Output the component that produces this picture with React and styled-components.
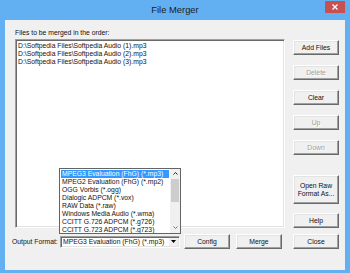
import React from 'react';
import styled, { createGlobalStyle } from 'styled-components';

const GlobalStyle = createGlobalStyle`
  html, body {
    margin: 0;
    padding: 0;
  }
  body {
    font-family: "Liberation Sans", Arial, sans-serif;
    background: #ffffff;
  }
`;

const Window = styled.div`
  width: 350px;
  height: 273px;
  box-sizing: border-box;
  background: #62b0f2;
  padding: 0 5px 3px 5px;
  display: flex;
  flex-direction: column;
`;

const TitleBar = styled.div`
  height: 20px;
  display: grid;
  grid-template-columns: 1fr auto 1fr;
  align-items: start;
`;

const Title = styled.div`
  grid-column: 2;
  font-size: 9.4px;
  line-height: 20px;
  color: #1c1c1c;
`;

const CloseBox = styled.div`
  grid-column: 3;
  justify-self: end;
  margin-top: 1px;
  width: 20px;
  height: 12px;
  background: #c75050;
  display: flex;
  align-items: center;
  justify-content: center;
`;

const Client = styled.div`
  flex: 1;
  background: #f0f0f0;
  display: grid;
  grid-template-columns: 280px 46px;
  column-gap: 8px;
  font-size: 6.8px;
  color: #111;
`;

const LeftColumn = styled.div`
  display: flex;
  flex-direction: column;
`;

const Caption = styled.div`
  margin: 9px 0 2px 10px;
  height: 8px;
  line-height: 8px;
`;

const ListBox = styled.div`
  margin-left: 10px;
  width: 270px;
  height: 189px;
  box-sizing: border-box;
  background: #fff;
  border: 1px solid;
  border-color: #a0a0a0 #ffffff #ffffff #a0a0a0;
  box-shadow: inset 1px 1px 0 #696969, inset -1px -1px 0 #e3e3e3;
  padding: 2px;
`;

const FileRow = styled.div`
  line-height: 8px;
  white-space: nowrap;
`;

const BottomRow = styled.div`
  margin-top: 6px;
  height: 15px;
  padding-left: 7px;
  display: flex;
  align-items: center;
`;

const FieldLabel = styled.div`
  width: 48px;
  white-space: nowrap;
`;

const ComboWrap = styled.div`
  position: relative;
  width: 120px;
  height: 12px;
  margin-right: 4px;
`;

const ComboField = styled.div`
  height: 100%;
  box-sizing: border-box;
  background: #fff;
  border: 1px solid;
  border-color: #a0a0a0 #ffffff #ffffff #a0a0a0;
  box-shadow: inset 1px 1px 0 #696969, inset -1px -1px 0 #e3e3e3;
  display: flex;
  align-items: center;
  padding: 0 1px 0 2px;
`;

const ComboText = styled.div`
  flex: 1;
  line-height: 8px;
  white-space: nowrap;
  overflow: hidden;
`;

const ComboButton = styled.div`
  width: 9px;
  height: 8px;
  background: #f0f0f0;
  display: flex;
  align-items: center;
  justify-content: center;
`;

const DropList = styled.div`
  position: absolute;
  left: -1px;
  bottom: calc(100% + 2px);
  width: 122px;
  height: 66px;
  box-sizing: border-box;
  border: 1px solid #646464;
  background: #fff;
  display: flex;
  overflow: hidden;
  z-index: 2;
`;

const DropItems = styled.div`
  flex: 1;
  padding: 1px 1px 0 1px;
  overflow: hidden;
`;

const DropItem = styled.div`
  line-height: 8px;
  height: 8px;
  padding-left: 1px;
  white-space: nowrap;
  box-sizing: border-box;
  background: ${(p) => (p.$selected ? '#3399ff' : 'transparent')};
  color: ${(p) => (p.$selected ? '#fff' : '#111')};
`;

const ScrollBar = styled.div`
  width: 10px;
  background: #f0f0f0;
  display: flex;
  flex-direction: column;
  align-items: center;
`;

const ScrollArrow = styled.div`
  height: 10px;
  width: 100%;
  display: flex;
  align-items: center;
  justify-content: center;
`;

const ScrollThumb = styled.div`
  width: 8px;
  height: 23px;
  background: #cdcdcd;
`;

const ScrollTrack = styled.div`
  flex: 1;
`;

const RightColumn = styled.div`
  display: flex;
  flex-direction: column;
  padding-top: 20px;
`;

const Button = styled.div`
  box-sizing: border-box;
  width: 46px;
  height: ${(p) => p.$h || 15}px;
  margin-top: ${(p) => p.$mt || 0}px;
  margin-left: ${(p) => p.$ml || 0}px;
  flex-shrink: 0;
  background: #f0f0f0;
  border: 1px solid;
  border-color: #ffffff #696969 #696969 #ffffff;
  box-shadow: inset -1px -1px 0 #a0a0a0, inset 1px 1px 0 #e3e3e3;
  display: flex;
  align-items: center;
  justify-content: center;
  text-align: center;
  line-height: 8px;
  color: ${(p) => (p.$disabled ? '#a0a0a0' : '#111')};
  text-shadow: ${(p) => (p.$disabled ? '1px 1px 0 #fff' : 'none')};
`;

const files = [
  'D:\\Softpedia Files\\Softpedia Audio (1).mp3',
  'D:\\Softpedia Files\\Softpedia Audio (2).mp3',
  'D:\\Softpedia Files\\Softpedia Audio (3).mp3',
];

const formats = [
  'MPEG3 Evaluation (FhG) (*.mp3)',
  'MPEG2 Evaluation (FhG) (*.mp2)',
  'OGG Vorbis (*.ogg)',
  'Dialogic ADPCM (*.vox)',
  'RAW Data (*.raw)',
  'Windows Media Audio (*.wma)',
  'CCITT G.726 ADPCM (*.g726)',
  'CCITT G.723 ADPCM (*.g723)',
];

function Chevron({ up }) {
  return (
    <svg width="5" height="3" viewBox="0 0 5 3">
      <path
        d={up ? 'M0.5 2.5 L2.5 0.5 L4.5 2.5' : 'M0.5 0.5 L2.5 2.5 L4.5 0.5'}
        fill="none"
        stroke={up ? '#222' : '#777'}
        strokeWidth="1"
      />
    </svg>
  );
}

function App() {
  return (
    <>
      <GlobalStyle />
      <Window>
        <TitleBar>
          <Title>File Merger</Title>
          <CloseBox>
            <svg width="6" height="6" viewBox="0 0 6 6">
              <path d="M0.5 0.5 L5.5 5.5 M5.5 0.5 L0.5 5.5" stroke="#fff" strokeWidth="1.3" />
            </svg>
          </CloseBox>
        </TitleBar>
        <Client>
          <LeftColumn>
            <Caption>Files to be merged in the order:</Caption>
            <ListBox>
              {files.map((f) => (
                <FileRow key={f}>{f}</FileRow>
              ))}
            </ListBox>
            <BottomRow>
              <FieldLabel>Output Format:</FieldLabel>
              <ComboWrap>
                <DropList>
                  <DropItems>
                    {formats.map((f, i) => (
                      <DropItem key={f} $selected={i === 0}>{f}</DropItem>
                    ))}
                  </DropItems>
                  <ScrollBar>
                    <ScrollArrow><Chevron up /></ScrollArrow>
                    <ScrollThumb />
                    <ScrollTrack />
                    <ScrollArrow><Chevron /></ScrollArrow>
                  </ScrollBar>
                </DropList>
                <ComboField>
                  <ComboText>MPEG3 Evaluation (FhG) (*.mp3)</ComboText>
                  <ComboButton>
                    <svg width="5" height="3" viewBox="0 0 5 3">
                      <path d="M0 0 L5 0 L2.5 3 Z" fill="#000" />
                    </svg>
                  </ComboButton>
                </ComboField>
              </ComboWrap>
              <Button>Config</Button>
              <Button $ml={6}>Merge</Button>
            </BottomRow>
          </LeftColumn>
          <RightColumn>
            <Button>Add Files</Button>
            <Button $mt={10} $disabled>Delete</Button>
            <Button $mt={10}>Clear</Button>
            <Button $mt={10} $disabled>Up</Button>
            <Button $mt={10} $disabled>Down</Button>
            <Button $mt={20} $h={29}>Open Raw<br />Format As...</Button>
            <Button $mt={9}>Help</Button>
            <Button $mt={6}>Close</Button>
          </RightColumn>
        </Client>
      </Window>
    </>
  );
}

export default App;
